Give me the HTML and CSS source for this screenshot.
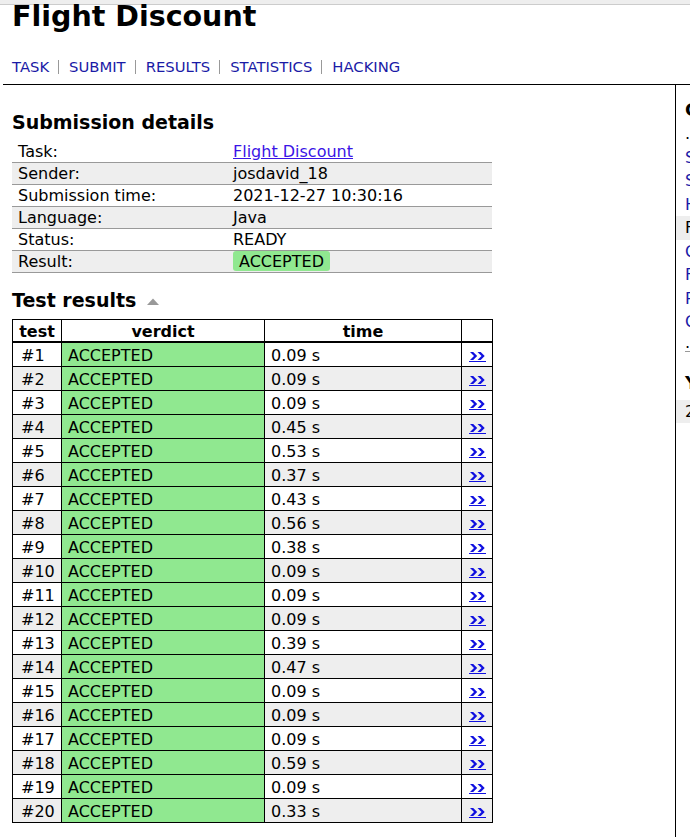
FILE: index.html
```html
<!DOCTYPE html>
<html lang="en">
<head>
<meta charset="utf-8">
<title>Flight Discount</title>
<link rel="stylesheet" href="styles.css">
</head>
<body>
<div class="topbar"></div>
<header class="header">
  <h1 class="title">Flight Discount</h1>
  <nav class="tabs">
    <a class="tab" href="#">TASK</a><a class="tab" href="#">SUBMIT</a><a class="tab" href="#">RESULTS</a><a class="tab" href="#">STATISTICS</a><a class="tab" href="#">HACKING</a>
  </nav>
</header>
<div class="page">
  <main class="content">
    <h2 class="section-title">Submission details</h2>
    <table class="summary">
      <tr><td class="label">Task:</td><td><a class="task-link" href="#">Flight Discount</a></td></tr>
      <tr><td class="label">Sender:</td><td>josdavid_18</td></tr>
      <tr><td class="label">Submission time:</td><td>2021-12-27 10:30:16</td></tr>
      <tr><td class="label">Language:</td><td>Java</td></tr>
      <tr><td class="label">Status:</td><td>READY</td></tr>
      <tr><td class="label">Result:</td><td><span class="badge">ACCEPTED</span></td></tr>
    </table>

    <h2 class="section-title results-title">Test results <svg class="sort-icon" width="12" height="7" viewBox="0 0 12 7"><polygon points="0,7 6,0.5 12,7" fill="#999"/></svg></h2>
    <table class="results">
      <colgroup><col class="c-test"><col class="c-verdict"><col class="c-time"><col class="c-link"></colgroup>
      <thead>
        <tr><th>test</th><th>verdict</th><th>time</th><th></th></tr>
      </thead>
      <tbody id="rows"></tbody>
    </table>
  </main>
  <aside class="sidebar">
    <h4 class="side-title">CSES Problem Set</h4>
    <div class="side-list">
      <span class="side-item side-dots">...</span>
      <a class="side-item" href="#">Shortest Routes I</a>
      <a class="side-item" href="#">Shortest Routes II</a>
      <a class="side-item" href="#">High Score</a>
      <span class="side-item current">Flight Discount</span>
      <a class="side-item" href="#">Cycle Finding</a>
      <a class="side-item" href="#">Flight Routes</a>
      <a class="side-item" href="#">Round Trip II</a>
      <a class="side-item" href="#">Course Schedule</a>
      <span class="side-item side-dots last">...</span>
    </div>
    <h4 class="side-title subs-title">Your submissions</h4>
    <div class="side-item current">2021-12-27 10:30:16</div>
  </aside>
</div>
<script src="script.js"></script>
</body>
</html>
```

FILE: script.js
```js
(function () {
  var times = ["0.09", "0.09", "0.09", "0.45", "0.53", "0.37", "0.43", "0.56", "0.38", "0.09",
               "0.09", "0.09", "0.39", "0.47", "0.09", "0.09", "0.09", "0.59", "0.09", "0.33"];
  var arrow = '<svg class="more-icon" width="15" height="8" viewBox="0 0 15 8">' +
    '<polygon points="0,0 3.2,0 7.2,4 3.2,8 0,8 4,4"/>' +
    '<polygon points="7.5,0 10.7,0 14.7,4 10.7,8 7.5,8 11.5,4"/></svg>';
  var html = "";
  for (var i = 0; i < times.length; i++) {
    html += '<tr><td>#' + (i + 1) + '</td><td class="ac">ACCEPTED</td><td>' + times[i] +
      ' s</td><td class="more"><a class="more-link" href="#">' + arrow + '</a></td></tr>';
  }
  document.getElementById("rows").innerHTML = html;
})();
```

FILE: styles.css
```css
html {
  overflow: hidden;
}
body {
  margin: 0;
  font-family: "DejaVu Sans", Verdana, sans-serif;
  font-size: 16px;
  color: #000;
  background: #fff;
}
.topbar {
  height: 4px;
  background: #eee;
  border-bottom: 1px solid #ccc;
}
.header {
  margin-left: 3px;
  padding-left: 9px;
  border-bottom: 1px solid #000;
}
.title {
  margin: 0;
  font-size: 28.5px;
  line-height: 24px;
  font-weight: bold;
}
.tabs {
  display: flex;
  align-items: center;
  margin-top: 31px;
  padding-bottom: 10px;
}
.tab {
  display: block;
  font-size: 14.8px;
  line-height: 14px;
  color: #1a1aa6;
  text-decoration: none;
  padding: 0 9px 0 10px;
  border-left: 1px solid #999;
}
.tab:first-child {
  padding-left: 0;
  border-left: none;
}
.page {
  display: flex;
  margin-left: 3px;
  min-height: 760px;
}
.content {
  width: 673px;
  flex: none;
  box-sizing: border-box;
  border-right: 1px solid #000;
  padding-left: 9px;
}
.section-title {
  margin: 25px 0 7px;
  font-size: 19px;
  line-height: 24px;
  font-weight: bold;
}
.results-title {
  margin: 15px 0 7px;
}
.sort-icon {
  margin-left: 4px;
  vertical-align: 2px;
}
.summary {
  width: 480px;
  border-collapse: collapse;
}
.summary td {
  padding: 1px 6px;
  line-height: 19px;
  border-bottom: 1px solid #999;
}
.summary td.label {
  width: 203px;
}
.summary tr:nth-child(even) td {
  background: #eee;
}
.task-link {
  color: #3a14e6;
}
.badge {
  background: #90e890;
  padding: 1px 6px 0;
  border-radius: 3px;
}
.results {
  width: 480px;
  table-layout: fixed;
  border-collapse: collapse;
}
.c-test { width: 49px; }
.c-verdict { width: 203px; }
.c-time { width: 197px; }
.c-link { width: 31px; }
.results th {
  border: 1px solid #000;
  border-bottom: 2px solid #000;
  padding: 2px 6px 0;
  line-height: 19px;
  font-weight: bold;
  text-align: center;
}
.results td {
  border: 1px solid #000;
  padding: 3px 6px 1px;
  line-height: 19px;
  height: 19px;
  white-space: nowrap;
}
.results td:first-child {
  padding-left: 8px;
}
.results tbody tr:nth-child(even) td {
  background: #eee;
}
.results td.ac,
.results tbody tr:nth-child(even) td.ac {
  background: #90e890;
}
.results td.more {
  height: 12px;
  padding: 9px 0 0;
  vertical-align: top;
  text-align: center;
  line-height: 0;
}
.more-link {
  display: inline-block;
  padding: 0 1px 1px;
  border-bottom: 1px solid #1010e0;
}
.more-icon {
  display: block;
  fill: #1010e0;
}
.sidebar {
  flex: 1;
  min-width: 0;
  overflow: hidden;
  white-space: nowrap;
  padding-left: 9px;
}
.side-title {
  margin: 14px 0 1px;
  font-size: 18px;
  line-height: 22px;
  font-weight: bold;
}
.side-list {
  display: flex;
  flex-direction: column;
}
.side-item {
  display: block;
  line-height: 23.5px;
  color: #1a1aa6;
  text-decoration: none;
  margin-left: -9px;
  padding-left: 9px;
}
.side-dots {
  color: #000;
}
.side-dots.last {
  line-height: 17px;
  border-bottom: 1px solid #999;
  margin-left: 0;
  padding-left: 0;
}
.current {
  background: #eee;
  color: #000;
}
.subs-title {
  margin: 20px 0 6px;
}
```
